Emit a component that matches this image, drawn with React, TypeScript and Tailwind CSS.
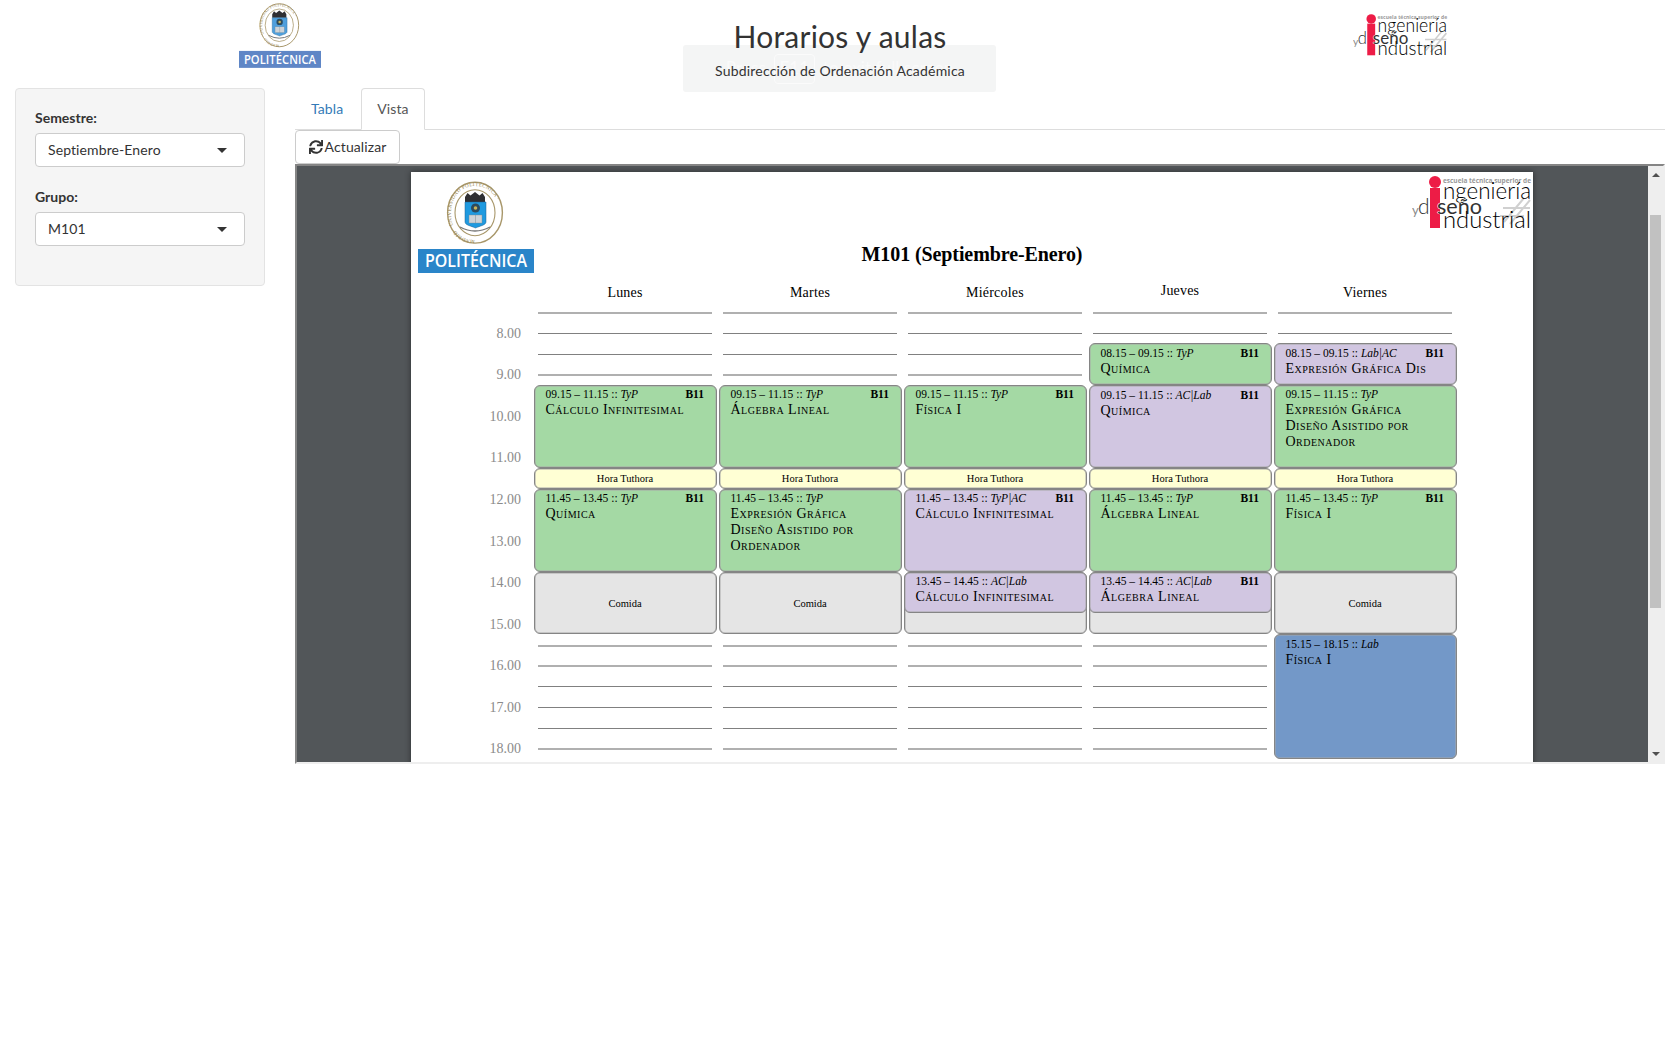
import { FaSync } from "react-icons/fa";

const lato = "font-['Lato','Liberation_Sans',sans-serif]";

function UpmLogo({ small }: { small?: boolean }) {
  const banner = small ? "#5f86c6" : "#2a85c9";
  const shield = small ? "#4f9fdc" : "#1f9ae0";
  return (
    <svg viewBox="0 0 116 93" className={small ? "block w-[82px] h-[66px]" : "block w-[116px] h-[93px]"}>
      <defs>
        <path id={small ? "ringS" : "ringL"} d="M57 60 C38 60 33 45 33 32.7 C33 18 42 6 57 6 C72 6 81 18 81 32.7 C81 45 76 60 57 60" fill="none" />
      </defs>
      <ellipse cx="57" cy="32.7" rx="27.4" ry="30.4" fill="#fff" stroke="#a8976a" strokeWidth="1.4" />
      <ellipse cx="57" cy="32.7" rx="20" ry="23" fill="#fff" stroke="#a8976a" strokeWidth="1.1" />
      <text fontSize="5.2" fill="#978758" fontFamily="Liberation Serif, serif" letterSpacing="0.3">
        <textPath href={small ? "#ringS" : "#ringL"}>MADRID · UNIVERSIDAD POLITÉCNICA · </textPath>
      </text>
      <path d="M47 17 L49.5 13 L52.5 15.5 L57 12 L61.5 15.5 L64.5 13 L67 17 L67 22 L47 22 Z" fill="#2f2f33" />
      <path d="M47 22 H68 V42 C68 45 62 46 57.5 48 C53 46 47 45 47 42 Z" fill={shield} stroke="#1e5f90" strokeWidth="0.5" />
      <circle cx="57.5" cy="28" r="4.5" fill="#2d4b5e" />
      <circle cx="57.5" cy="28" r="1.8" fill="#c9b35a" />
      <rect x="51" y="35" width="13" height="8" fill="#cdd3d8" stroke="#7f8a92" strokeWidth="0.4" />
      <path d="M57.5 35 V43" stroke="#7f8a92" strokeWidth="0.5" />
      <path d="M42 47 Q57 55 72 47" fill="none" stroke="#777" strokeWidth="1.4" />
      <rect x="0" y="69" width="116" height="24" fill={banner} />
      <text x="58" y="87" textAnchor="middle" fill="#fff" fontSize="18" fontWeight="600" fontFamily="Open Sans, sans-serif" textLength="102" lengthAdjust="spacingAndGlyphs">POLITÉCNICA</text>
    </svg>
  );
}

function DisenoLogo({ small }: { small?: boolean }) {
  return (
    <svg viewBox="0 0 120 54" className={small ? "block w-[95px] h-[43px]" : "block w-[120px] h-[54px]"}>
      <g stroke="#d0d0d0" strokeWidth="2" fill="none">
        <path d="M92 46 L112 22 M98 48 L118 24 M91 32 L118 32 M88 40 L112 40" />
      </g>
      <circle cx="23" cy="6" r="6" fill="#ed1c46" />
      <rect x="18" y="12" width="10" height="40" fill="#ed1c46" />
      <text x="31" y="6.5" fontSize="6.6" fontWeight="700" fill="#999" fontFamily="Open Sans, sans-serif" textLength="88" lengthAdjust="spacingAndGlyphs">escuela técnica superior de</text>
      <text x="31" y="23" fontSize="24" fill="#000" fontFamily="Lato, sans-serif" fontWeight="300" textLength="88" lengthAdjust="spacingAndGlyphs">ngeniería</text>
      <text x="0" y="39" fontSize="13" fill="#8a8a8a" fontFamily="Lato, sans-serif" fontWeight="400">y</text>
      <text x="6" y="38" fontSize="21" fill="#333" fontFamily="Lato, sans-serif" fontWeight="300">d</text>
      <text x="25" y="38" fontSize="21" fill="#333" stroke="#fff" strokeWidth="1" paintOrder="stroke" fontFamily="Lato, sans-serif" fontWeight="400" textLength="45" lengthAdjust="spacingAndGlyphs">seño</text>
      <text x="31" y="52" fontSize="24" fill="#000" fontFamily="Lato, sans-serif" fontWeight="300" textLength="88" lengthAdjust="spacingAndGlyphs">ndustrial</text>
    </svg>
  );
}

function SelectBox({ label, value }: { label: string; value: string }) {
  return (
    <div className="mb-5">
      <div className="mb-[5px] text-sm leading-5 font-bold tracking-normal text-[#333]">{label}</div>
      <div className="flex h-[34px] items-center justify-between rounded border border-[#ccc] bg-white pl-3 pr-[17px] text-sm text-[#333]">
        <span>{value}</span>
        <span className="h-0 w-0 border-x-[5px] border-t-[5px] border-x-transparent border-t-[#333]" />
      </div>
    </div>
  );
}

type Block = {
  row: string;
  color: string;
  time?: string;
  kind?: string;
  room?: boolean;
  title?: string[];
  center?: string;
  pad?: string;
};

const GREEN = "bg-[#a4d9a4]";
const PURPLE = "bg-[#d1c6e1]";
const BLUE = "bg-[#7398c8]";
const GRAY = "bg-[#e5e5e5]";
const YELLOW = "bg-[#ffffd4]";

const tutor: Block = { row: "row-[16/18]", color: YELLOW, center: "Hora Tuthora" };
const comida: Block = { row: "row-[26/32]", color: GRAY, center: "Comida", pad: "pt-[2px]" };
const comidaEmpty: Block = { row: "row-[26/32]", color: GRAY };

const thin = "h-px bg-[#808080]";
const thick = "h-[2px] bg-[#b0b0b0]";

const fullLines = [
  { row: "row-[1/2]", cls: thick },
  { row: "row-[3/4]", cls: thin },
  { row: "row-[5/6]", cls: thin },
  { row: "row-[7/8]", cls: thick },
  { row: "row-[33/34]", cls: thick },
  { row: "row-[35/36]", cls: thick },
  { row: "row-[37/38]", cls: thin },
  { row: "row-[39/40]", cls: thin },
  { row: "row-[41/42]", cls: thin },
  { row: "row-[43/44]", cls: thick },
];

const days: { name: string; up?: boolean; lines: { row: string; cls: string }[]; blocks: Block[] }[] = [
  {
    name: "Lunes",
    lines: fullLines,
    blocks: [
      { row: "row-[8/16]", color: GREEN, time: "09.15 – 11.15 :: ", kind: "TyP", room: true, title: ["Cálculo Infinitesimal"] },
      tutor,
      { row: "row-[18/26]", color: GREEN, time: "11.45 – 13.45 :: ", kind: "TyP", room: true, title: ["Química"] },
      comida,
    ],
  },
  {
    name: "Martes",
    lines: fullLines,
    blocks: [
      { row: "row-[8/16]", color: GREEN, time: "09.15 – 11.15 :: ", kind: "TyP", room: true, title: ["Álgebra Lineal"] },
      tutor,
      { row: "row-[18/26]", color: GREEN, time: "11.45 – 13.45 :: ", kind: "TyP", title: ["Expresión Gráfica", "Diseño Asistido por", "Ordenador"] },
      comida,
    ],
  },
  {
    name: "Miércoles",
    lines: fullLines,
    blocks: [
      { row: "row-[8/16]", color: GREEN, time: "09.15 – 11.15 :: ", kind: "TyP", room: true, title: ["Física I"] },
      tutor,
      { row: "row-[18/26]", color: PURPLE, time: "11.45 – 13.45 :: ", kind: "TyP|AC", room: true, title: ["Cálculo Infinitesimal"] },
      comidaEmpty,
      { row: "row-[26/30]", color: PURPLE, time: "13.45 – 14.45 :: ", kind: "AC|Lab", title: ["Cálculo Infinitesimal"] },
    ],
  },
  {
    name: "Jueves",
    up: true,
    lines: [
      { row: "row-[1/2]", cls: thick },
      { row: "row-[3/4]", cls: thin },
      { row: "row-[33/34]", cls: thick },
      { row: "row-[35/36]", cls: thick },
      { row: "row-[37/38]", cls: thin },
      { row: "row-[39/40]", cls: thin },
      { row: "row-[41/42]", cls: thin },
      { row: "row-[43/44]", cls: thick },
    ],
    blocks: [
      { row: "row-[4/8]", color: GREEN, time: "08.15 – 09.15 :: ", kind: "TyP", room: true, title: ["Química"], pad: "pt-[1px]" },
      { row: "row-[8/16]", color: PURPLE, time: "09.15 – 11.15 :: ", kind: "AC|Lab", room: true, title: ["Química"], pad: "pt-[1px]" },
      tutor,
      { row: "row-[18/26]", color: GREEN, time: "11.45 – 13.45 :: ", kind: "TyP", room: true, title: ["Álgebra Lineal"] },
      comidaEmpty,
      { row: "row-[26/30]", color: PURPLE, time: "13.45 – 14.45 :: ", kind: "AC|Lab", room: true, title: ["Álgebra Lineal"] },
    ],
  },
  {
    name: "Viernes",
    lines: [
      { row: "row-[1/2]", cls: thick },
      { row: "row-[3/4]", cls: thin },
    ],
    blocks: [
      { row: "row-[4/8]", color: PURPLE, time: "08.15 – 09.15 :: ", kind: "Lab|AC", room: true, title: ["Expresión Gráfica Dis"], pad: "pt-[1px]" },
      { row: "row-[8/16]", color: GREEN, time: "09.15 – 11.15 :: ", kind: "TyP", title: ["Expresión Gráfica", "Diseño Asistido por", "Ordenador"] },
      tutor,
      { row: "row-[18/26]", color: GREEN, time: "11.45 – 13.45 :: ", kind: "TyP", room: true, title: ["Física I"] },
      comida,
      { row: "row-[32/44]", color: BLUE, time: "15.15 – 18.15 :: ", kind: "Lab", title: ["Física I"], pad: "pt-[1px]" },
    ],
  },
];

const hours: { label: string; row: string }[] = [
  { label: "8.00", row: "row-[2/4]" },
  { label: "9.00", row: "row-[6/8]" },
  { label: "10.00", row: "row-[10/12]" },
  { label: "11.00", row: "row-[14/16]" },
  { label: "12.00", row: "row-[18/20]" },
  { label: "13.00", row: "row-[22/24]" },
  { label: "14.00", row: "row-[26/28]" },
  { label: "15.00", row: "row-[30/32]" },
  { label: "16.00", row: "row-[34/36]" },
  { label: "17.00", row: "row-[38/40]" },
  { label: "18.00", row: "row-[42/44]" },
];

const rowsClass = "grid grid-rows-[repeat(43,10.4px)]";

function ClassBlock({ b }: { b: Block }) {
  const base = `col-start-1 ${b.row} ${b.color} ${b.pad ?? ""} -mx-[0.5px] rounded-[6px] border border-[#858585] shadow-[inset_0_0_0_0.5px_#a8a8a8] overflow-hidden`;
  if (!b.time) {
    return (
      <div className={`${base} flex items-center justify-center text-[10.5px] text-black`}>
        {b.center}
      </div>
    );
  }
  return (
    <div className={`${base} pl-[11px] pr-[11.5px] text-black`}>
      <div className="flex justify-between text-[11.5px] leading-[16px]">
        <span>
          {b.time}
          <i>{b.kind}</i>
        </span>
        {b.room && <b>B11</b>}
      </div>
      {b.title?.map((t) => (
        <div key={t} className="text-[14px] leading-[16px] tracking-[0.5px] [font-variant:small-caps] whitespace-nowrap">
          {t}
        </div>
      ))}
    </div>
  );
}

function DayColumn({ day }: { day: (typeof days)[number] }) {
  return (
    <div className={`${rowsClass} grid-cols-1 w-[182px]`}>
      {day.lines.map((l) => (
        <div key={l.row} className={`col-start-1 ${l.row} ${l.cls} mx-[4px] self-start`} />
      ))}
      {day.blocks.map((b, i) => (
        <ClassBlock key={i} b={b} />
      ))}
    </div>
  );
}

function PdfPage() {
  return (
    <div className="ml-[114px] mt-[6px] w-[1122px] bg-white shadow-[0_0_6px_rgba(0,0,0,0.45)] font-['Liberation_Serif',serif] tracking-normal text-black">
      <div className="grid h-[110px] grid-cols-[1fr_auto_1fr]">
        <div className="pl-[7px] pt-2">
          <UpmLogo />
        </div>
        <div className="pt-[70px] text-[20px] leading-6 font-bold tracking-[-0.1px]">M101 (Septiembre-Enero)</div>
        <div className="flex justify-end pr-px pt-1">
          <DisenoLogo />
        </div>
      </div>
      <div className="flex h-[30px] gap-[3px] pl-[123px]">
        {days.map((d) => (
          <div key={d.name} className={`w-[182px] text-center text-[14px] leading-5 tracking-[0.2px] ${d.up ? "-mt-[1px]" : "pt-[1px]"}`}>
            {d.name}
          </div>
        ))}
      </div>
      <div className="flex h-[460px] pl-[7px]">
        <div className={`${rowsClass} w-[103px] pt-[1px] text-[14px] text-[#8b8b8b]`}>
          {hours.map((h) => (
            <div key={h.label} className={`${h.row} flex items-center justify-end leading-none`}>
              {h.label}
            </div>
          ))}
        </div>
        <div className="ml-[13px] flex gap-[3px]">
          {days.map((d) => (
            <DayColumn key={d.name} day={d} />
          ))}
        </div>
      </div>
    </div>
  );
}

function PdfScrollbar() {
  return (
    <div className="flex w-[15px] shrink-0 flex-col items-center bg-[#eeeeee]">
      <div className="flex h-[17px] w-full items-center justify-center">
        <span className="h-0 w-0 border-x-[4px] border-b-[4px] border-x-transparent border-b-[#505050]" />
      </div>
      <div className="mt-[32px] h-[393px] w-[11px] bg-[#c1c1c1]" />
      <div className="flex-1" />
      <div className="flex h-[17px] w-full items-center justify-center">
        <span className="h-0 w-0 border-x-[4px] border-t-[4px] border-x-transparent border-t-[#505050]" />
      </div>
    </div>
  );
}

export default function App() {
  return (
    <div className={`${lato} min-h-[1050px] bg-white text-sm tracking-[0.1px] text-[#333]`}>
      <header className="relative grid h-[88px] grid-cols-3">
        <div className="flex justify-center pt-[2px]">
          <UpmLogo small />
        </div>
        <div className="relative z-10 text-center">
          <h2 className="mt-5 text-[30px] leading-[33px] font-normal tracking-[0.25px] text-[#333]">Horarios y aulas</h2>
          <div className="mt-2 text-sm leading-5 tracking-[0.2px] text-[#333]">Subdirección de Ordenación Académica</div>
        </div>
        <div className="flex justify-center pt-[14px]">
          <DisenoLogo small />
        </div>
        <div className="absolute left-[683px] top-[45px] flex h-[47px] w-[313px] items-center justify-center gap-2 rounded-[3px] bg-[#f4f5f5] text-[#fafafa]">
          <span className="text-[17px]">Press</span>
          <span className="flex h-[30px] w-[41px] items-center justify-center rounded border border-[#fbfbfb] text-[17px]">F11</span>
          <span className="text-[17px]">to exit full screen</span>
        </div>
      </header>

      <main className="flex gap-[30px] px-[15px]">
        <aside className="h-[198px] w-[250px] shrink-0 rounded border border-[#e3e3e3] bg-[#f5f5f5] px-[19px] pt-[19px]">
          <SelectBox label="Semestre:" value="Septiembre-Enero" />
          <SelectBox label="Grupo:" value="M101" />
        </aside>

        <section className="min-w-0 flex-1">
          <nav className="flex h-[42px] border-b border-[#ddd]">
            <a className="mr-[2px] h-[41px] border border-transparent px-[15px] py-[10px] leading-5 text-[#337ab7]">Tabla</a>
            <a className="h-[42px] rounded-t border border-[#ddd] border-b-white bg-white px-[15px] py-[10px] leading-5 text-[#555]">Vista</a>
          </nav>
          <button className="flex h-[34px] w-[105px] items-center justify-center gap-[2px] rounded border border-[#ccc] bg-white text-sm text-[#333]">
            <FaSync className="h-[14px] w-[14px]" />
            <span>Actualizar</span>
          </button>
          <div className="flex h-[600px] overflow-hidden border-2 border-t-[#858585] border-l-[#858585] border-r-[#eeeeee] border-b-[#eeeeee] bg-[#525659]">
            <div className="min-w-0 flex-1 overflow-hidden">
              <PdfPage />
            </div>
            <PdfScrollbar />
          </div>
        </section>
      </main>
    </div>
  );
}
